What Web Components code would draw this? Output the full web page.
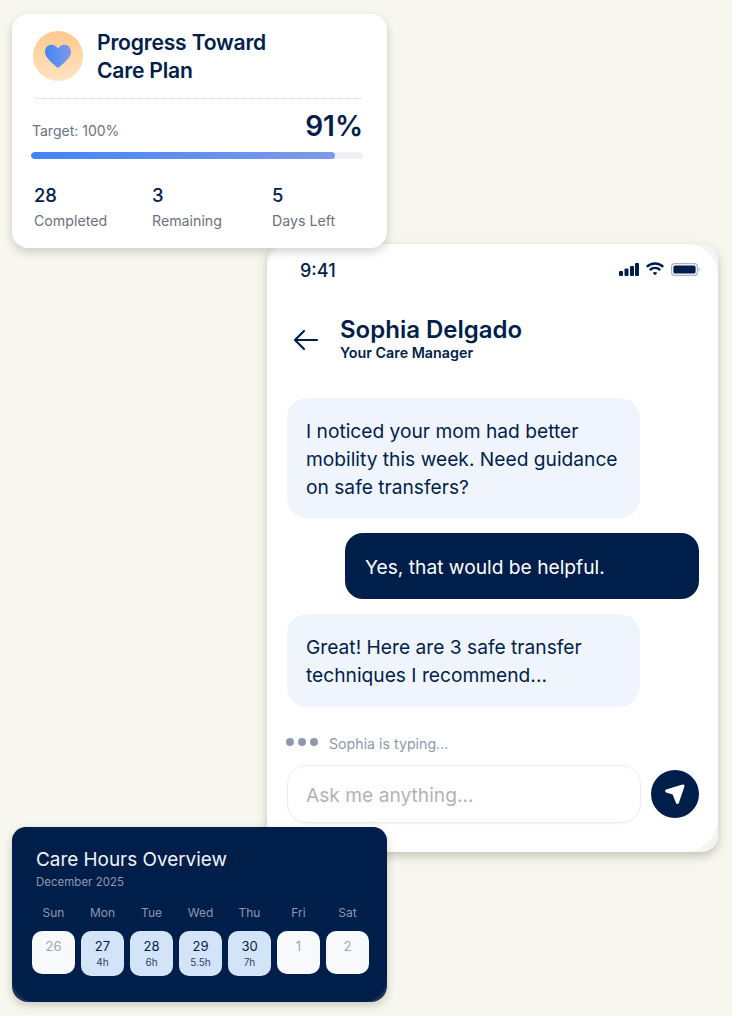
<!DOCTYPE html>
<html><head><meta charset="utf-8"><style>
html,body{margin:0;padding:0;background:#f7f7ef;}
body{width:732px;height:1016px;overflow:hidden;font-family:Inter,"Liberation Sans",sans-serif;color:#001e4a;}
care-stage{display:flex;}
</style></head><body>
<care-stage>
  <progress-card></progress-card>
  <chat-phone></chat-phone>
  <hours-card></hours-card>
</care-stage>
<template id="stat-t"><style>
:host{display:flex;flex-direction:column;gap:5px;font-family:Inter,sans-serif}
.v{font-size:18.4px;line-height:24px;font-weight:500;color:#001e4a}
.l{font-size:14.2px;line-height:18px;color:#6b7280}
</style><div class="v"></div><div class="l"></div></template>
<script>
const tpl=(html)=>{const t=document.createElement('template');t.innerHTML=html;return t;};
class Base extends HTMLElement{constructor(){super();this.attachShadow({mode:'open'}).append(this.constructor.t.content.cloneNode(true));}}
class CareStage extends Base{static t=tpl(`<style>:host{display:flex;flex-direction:column;width:732px;height:1016px;padding-top:14px;box-sizing:border-box;position:relative}
::slotted(progress-card){align-self:flex-start;margin-left:12px;position:relative;z-index:1}
::slotted(chat-phone){margin-left:267px;margin-top:-4px}
::slotted(hours-card){margin-left:12px;margin-top:-25px;position:relative;z-index:2}
</style><slot></slot>`)}
class StatItem extends Base{static t=document.getElementById('stat-t');
 connectedCallback(){this.shadowRoot.querySelector('.v').textContent=this.getAttribute('v');this.shadowRoot.querySelector('.l').textContent=this.getAttribute('l');}}
class ProgressCard extends Base{static t=tpl(`<style>
:host{display:block;width:375px;height:234px;box-sizing:border-box;background:#fff;border-radius:16px;box-shadow:0 4px 10px rgba(60,60,40,.22);padding:17px 24px 0 19px}
.head{display:flex;gap:14px;height:64px;margin-left:2px}
.ic{width:50px;height:50px;border-radius:50%;background:linear-gradient(180deg,#ffc98c,#ffe3c2);display:flex;align-items:center;justify-content:center;flex:none}
h2{margin:-2px 0 0;font-size:21.1px;line-height:27.5px;font-weight:600;color:#001e4a;letter-spacing:-.2px}
.div{border-top:1px dotted #c9cdd6;margin:3px 2px 0 5px;height:0}
.row{display:flex;justify-content:space-between;align-items:flex-end;margin-top:7px;margin-left:1px;height:38px}
.t{font-size:14px;line-height:18px;color:#6b7280;padding-bottom:4px}
.p{font-size:28px;line-height:36px;font-weight:600;color:#001e4a}
.bar{height:7px;border-radius:4px;background:#f0f1f6;margin:8px 0 0 0;overflow:hidden}
.fill{height:100%;width:91.5%;border-radius:4px;background:linear-gradient(90deg,#4285f4,#7f99ea)}
.stats{display:grid;grid-template-columns:118px 120px 1fr;margin:24px 0 0 3px}
</style><div class="head"><div class="ic"><svg width="28" height="26" viewBox="0 0 28 26"><defs><linearGradient id="h" x1="0" x2="1"><stop offset="0" stop-color="#4285f4"/><stop offset="1" stop-color="#7f99ea"/></linearGradient></defs><path d="M14 25C12.8 24 9 21 6 18 3 15.2 1 12.4 1 8.6 1 4.6 4 1.8 7.4 1.8 10 1.8 12.6 3.2 14 5.6 15.4 3.2 18 1.8 20.6 1.8 24 1.8 27 4.6 27 8.6 27 12.4 25 15.2 22 18 19 21 15.2 24 14 25Z" fill="url(#h)"/></svg></div><h2>Progress Toward<br>Care Plan</h2></div>
<div class="div"></div><div class="row"><span class="t">Target: 100%</span><span class="p">91%</span></div><div class="bar"><div class="fill"></div></div>
<div class="stats"><stat-item v="28" l="Completed"></stat-item><stat-item v="3" l="Remaining"></stat-item><stat-item v="5" l="Days Left"></stat-item></div>`)}
class ChatBubble extends Base{static t=tpl(`<style>
:host{display:block;width:353px;box-sizing:border-box;padding:19px 16px 17px 19px;background:#f0f5fd;color:#001e4a;border-radius:20px;font-size:19.2px;line-height:28px;font-family:Inter,sans-serif}
:host([me]){background:#001e4a;color:#fff;align-self:flex-end;width:354px;border-radius:18px;padding:20px 20px 18px}
:host([mid]){padding:19px 16px 18px 19px}
</style><slot></slot>`)}
class ChatPhone extends Base{static t=tpl(`<style>
:host{display:block;width:451px;height:608px;background:#f4f4f4;border-radius:16px;box-shadow:0 4px 10px rgba(60,60,40,.28);}
.in{box-sizing:border-box;height:100%;background:#fff;border-radius:24px 32px 34px 16px;padding:0 19px 0 20px;display:flex;flex-direction:column}
.st{display:flex;justify-content:space-between;align-items:center;height:52px;padding:1px 0 0 13px;box-sizing:border-box}
.tm{font-size:18px;font-weight:500;line-height:50px;color:#001e4a}
.ic{display:flex;align-items:center;gap:7px;margin-right:-1px;margin-top:-3px}
.hd{display:flex;align-items:center;height:102px;box-sizing:border-box;padding-bottom:18px;gap:21px;margin-left:6px}
.hd svg{margin-top:3px}
.nm{font-size:24px;line-height:30px;font-weight:600;color:#001e4a}
.sb{font-size:14.3px;line-height:16px;font-weight:600;color:#001e4a}
.msgs{display:flex;flex-direction:column;gap:15px}
.ty{display:flex;align-items:center;gap:11px;margin-top:17px;height:41px;font-size:14.2px;color:#8e99ac;box-sizing:border-box;padding-bottom:2px}
.ty .d{display:flex;gap:4px;margin-top:-4px;margin-left:-1px}
.ty i{width:8px;height:8px;border-radius:50%;background:#8e99ac;display:block}
.ip{display:flex;align-items:center;gap:10px}
.box{flex:1;height:58px;box-sizing:border-box;border:1.5px solid #ecedf0;border-radius:20px;font-size:19.2px;color:#b3b3b3;padding:1px 18px 0;display:flex;align-items:center;box-shadow:0 1px 2px rgba(0,0,0,.05)}
.snd{width:48px;height:48px;border-radius:50%;background:#001e4a;display:flex;align-items:center;justify-content:center;flex:none}
</style><div class="in"><div class="st"><span class="tm">9:41</span><span class="ic">
<svg width="20" height="13" viewBox="0 0 20 13" fill="#001e4a"><rect x="0" y="8" width="4" height="5" rx="1"/><rect x="5.5" y="5.5" width="4" height="7.5" rx="1"/><rect x="11" y="3" width="4" height="10" rx="1"/><rect x="16" y="0" width="4" height="13" rx="1"/></svg>
<svg width="18" height="14" viewBox="0 0 18 14" fill="none" stroke="#001e4a" stroke-width="2.4"><path d="M.8 4.8C5.4.4 12.6.4 17.2 4.8"/><path d="M3.8 8C6.8 5.2 11.2 5.2 14.2 8"/><path d="M6.8 11 9 13.2 11.2 11C10 9.8 8 9.8 6.8 11Z" fill="#001e4a" stroke="none"/></svg>
<svg width="29" height="13" viewBox="0 0 29 13"><rect x=".6" y=".6" width="25.8" height="11.8" rx="3" fill="none" stroke="#a9b4cb" stroke-width="1.2"/><rect x="2.4" y="2.4" width="22.2" height="8.2" rx="1.6" fill="#001e4a"/><path d="M27.6 4.5C28.6 5 28.8 5.6 28.8 6.5S28.6 8 27.6 8.5Z" fill="#a9b4cb"/></svg></span></div>
<div class="hd"><svg width="26" height="22" viewBox="0 0 26 22" fill="none" stroke="#001e4a" stroke-width="2.2" stroke-linecap="round" stroke-linejoin="round"><path d="M24 11H2M11 2 2 11l9 9"/></svg><div><div class="nm">Sophia Delgado</div><div class="sb">Your Care Manager</div></div></div>
<div class="msgs"><chat-bubble>I noticed your mom had better mobility this week. Need guidance on safe transfers?</chat-bubble><chat-bubble me>Yes, that would be helpful.</chat-bubble><chat-bubble mid>Great! Here are 3 safe transfer techniques I recommend...</chat-bubble></div>
<div class="ty"><span class="d"><i></i><i></i><i></i></span><span>Sophia is typing...</span></div>
<div class="ip"><div class="box">Ask me anything...</div><div class="snd"><svg width="24" height="24" viewBox="0 0 24 24" fill="#fff" stroke="#fff" stroke-width="3" stroke-linejoin="round"><path d="M20 4 3.6 9 10.8 11.4 14.4 20.4Z"/></svg></div></div></div>`)}
class DayCell extends Base{static t=tpl(`<style>
:host{display:flex;flex-direction:column;align-items:center;box-sizing:border-box;width:43px;height:43px;border-radius:10px;background:#f8f9fc;color:#9ea6b7;font-size:13px;line-height:16px;padding-top:5.5px;font-family:Inter,sans-serif;border:1px solid rgba(255,255,255,.12)}
:host([h]){height:45px;background:#d3e3f8;color:#001e4a}
small{font-size:10px;line-height:14px;margin-top:1.5px;color:#2c4468}
</style><slot></slot><small></small>`);
 connectedCallback(){const s=this.shadowRoot.querySelector('small');s.textContent=this.getAttribute('h')||'';s.hidden=!this.hasAttribute('h');}}
class HoursCard extends Base{static t=tpl(`<style>
:host{display:block;width:375px;height:175px;background:#1b3057;border-radius:16px;box-shadow:0 3px 8px rgba(60,60,40,.25)}
.in{box-sizing:border-box;height:100%;background:#001e4a;border-radius:14px 14px 24px 24px;padding:21px 18px 0 20px;color:#fff}
h3{margin:0 0 0 4px;font-size:18.9px;line-height:24px;font-weight:400;color:#f2f4f7}
.m{margin:2px 0 0 4px;font-size:11.5px;line-height:16px;color:#8d99ad}
.g{display:grid;grid-template-columns:repeat(7,43px);column-gap:6px;margin-top:15px;justify-content:space-between;align-items:start}
.w{font-size:12px;line-height:16px;color:#8d99ad;text-align:center;height:26px}
</style><div class="in"><h3>Care Hours Overview</h3><div class="m">December 2025</div>
<div class="g"><span class="w">Sun</span><span class="w">Mon</span><span class="w">Tue</span><span class="w">Wed</span><span class="w">Thu</span><span class="w">Fri</span><span class="w">Sat</span>
<day-cell>26</day-cell><day-cell h="4h">27</day-cell><day-cell h="6h">28</day-cell><day-cell h="5.5h">29</day-cell><day-cell h="7h">30</day-cell><day-cell>1</day-cell><day-cell>2</day-cell></div></div>`)}
customElements.define('care-stage',CareStage);customElements.define('stat-item',StatItem);customElements.define('progress-card',ProgressCard);customElements.define('chat-bubble',ChatBubble);customElements.define('chat-phone',ChatPhone);customElements.define('day-cell',DayCell);customElements.define('hours-card',HoursCard);
</script>
</body></html>
